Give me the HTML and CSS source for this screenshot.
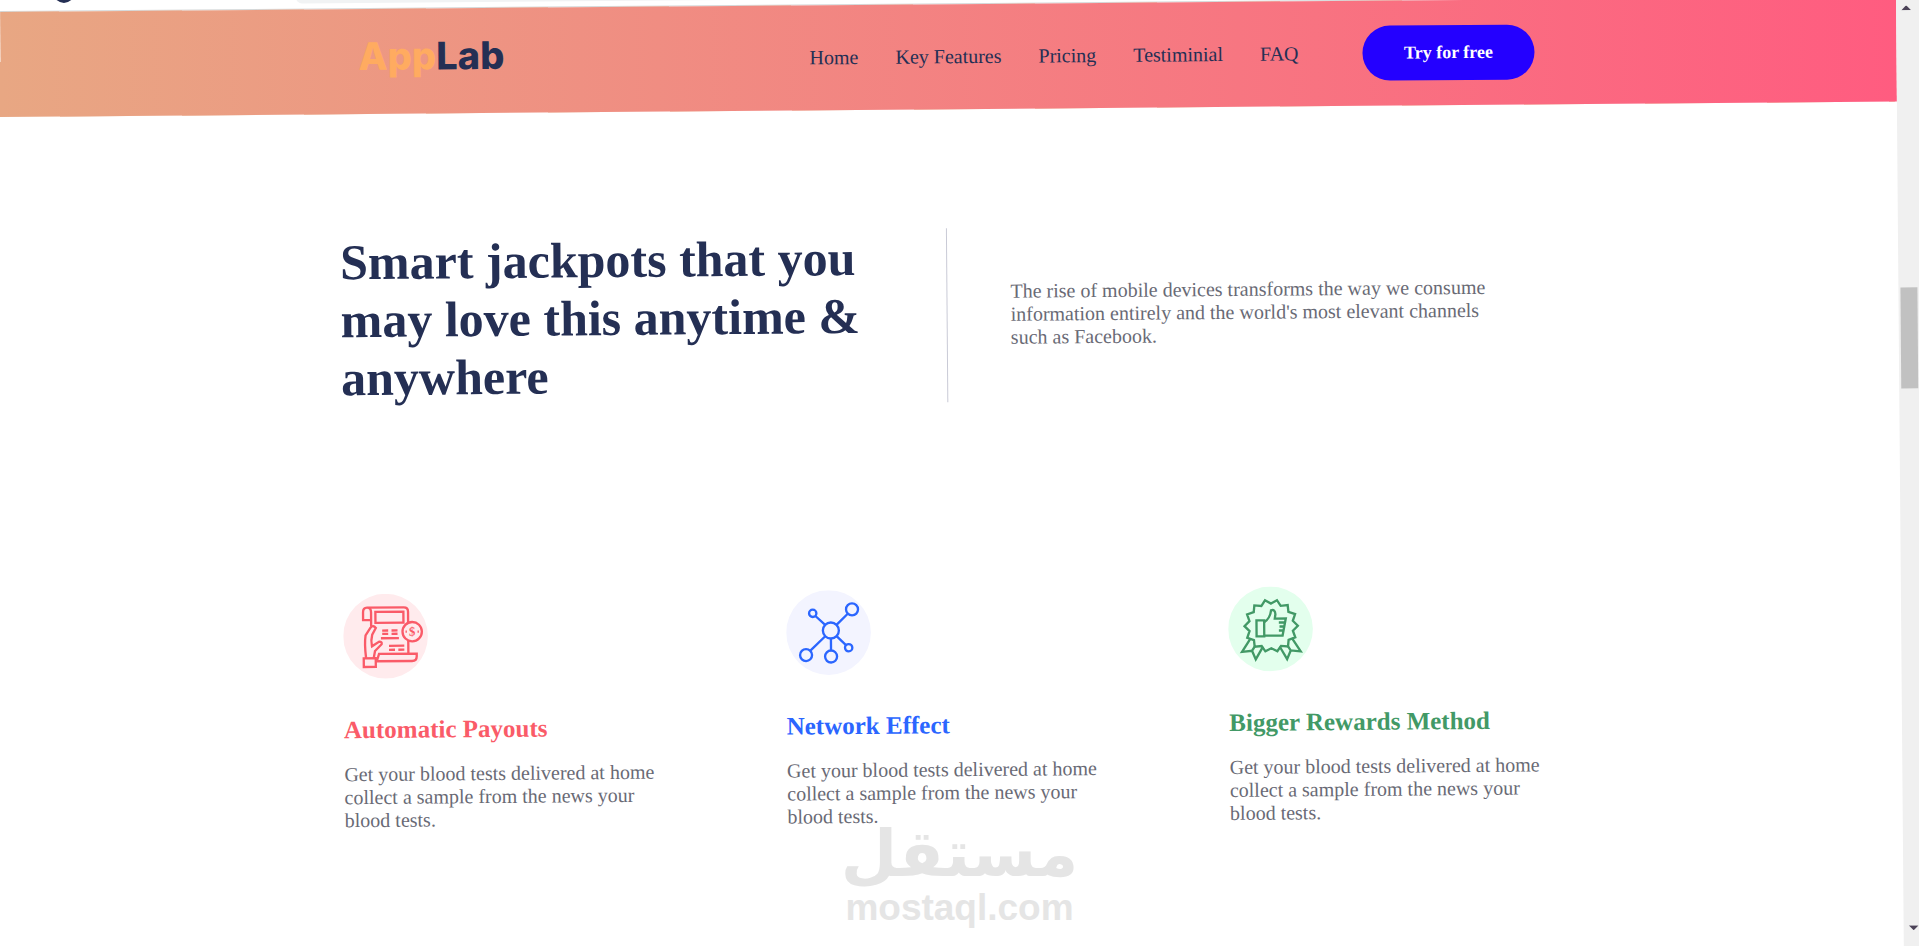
FILE: index.html
```html
<!DOCTYPE html>
<html lang="en">
<head>
    <meta charset="UTF-8">
    <meta name="viewport" content="width=device-width, initial-scale=1.0">
    <title>AppLab</title>
    <link rel="stylesheet" href="styles.css">
</head>
<body>
    <div class="screen">
        <div class="browser-bar">
            <svg class="reload" viewBox="0 0 20 5"><path d="M2 0Q10 7 18 0"/></svg>
            <div class="address"></div>
        </div>
        <div class="window">
            <div class="site">
                <header class="header">
                    <div class="container nav-bar">
                        <a class="logo" href="#"><span>App</span>Lab</a>
                        <nav class="menu">
                            <a href="#">Home</a>
                            <a href="#">Key Features</a>
                            <a href="#">Pricing</a>
                            <a href="#">Testiminial</a>
                            <a href="#">FAQ</a>
                        </nav>
                        <button class="try-btn" type="button">Try for free</button>
                    </div>
                </header>
                <main>
                    <section class="container intro">
                        <h1>Smart jackpots that you may love this anytime &amp; anywhere</h1>
                        <p>The rise of mobile devices transforms the way we consume information entirely and the world's most elevant channels such as Facebook.</p>
                    </section>
                    <section class="container features">
                        <article class="feature red">
                            <svg class="icon" viewBox="0 0 255 255">
                                <circle class="disc" cx="127" cy="127" r="127"/>
                                <path d="M83 78H60V55q0-14 12-14H182q13 0 13 13V86M72 41q12 0 12 14V98M195 142V178"/>
                                <rect x="97" y="54" width="84" height="33"/>
                                <path d="M117 110h18M145 110h18M117 120h18M145 120h18M113 133h54M137 156h46M137 168h18M165 168h18"/>
                                <circle cx="207" cy="114" r="29"/>
                                <text x="207" y="126">$</text>
                                <path d="M187 114h4M223 114h4"/>
                                <path d="M68 192Q63 150 67 124L82 101Q90 92 98 102L87 122Q82 140 86 157L108 143Q117 143 115 151L95 171L91 192"/>
                                <rect x="61" y="193" width="36" height="26"/>
                                <path d="M100 202L107 180H220V188q0 14-14 14H98"/>
                            </svg>
                            <h2>Automatic Payouts</h2>
                            <p>Get your blood tests delivered at home collect a sample from the news your blood tests.</p>
                        </article>
                        <article class="feature blue">
                            <svg class="icon" viewBox="0 0 255 255">
                                <circle class="disc" cx="127" cy="127" r="127"/>
                                <circle cx="134" cy="121" r="24"/>
                                <circle cx="80" cy="69" r="11"/>
                                <circle cx="198" cy="58" r="18"/>
                                <circle cx="59" cy="194" r="18"/>
                                <circle cx="134" cy="199" r="18"/>
                                <circle cx="187" cy="173" r="11"/>
                                <path d="M88 77L117 104M185 71L151 104M72 181L117 138M134 145V181M151 138L179 165"/>
                            </svg>
                            <h2>Network Effect</h2>
                            <p>Get your blood tests delivered at home collect a sample from the news your blood tests.</p>
                        </article>
                        <article class="feature green">
                            <svg class="icon" viewBox="0 0 255 255">
                                <circle class="disc" cx="127" cy="127" r="127"/>
                                <path d="M129 51L147 41L158 58L179 56L181 76L201 83L194 103L209 118L194 133L201 153L181 160L179 180L158 178L147 194L129 185L111 194L100 178L79 180L77 160L57 153L64 133L49 118L64 103L57 83L77 76L79 56L100 58L111 41Z"/>
                                <path d="M67 155L41 195L71 192L82 218L104 180M79 180L71 192M191 155L217 195L187 192L176 218L154 180M179 180L187 192"/>
                                <rect x="85" y="101" width="23" height="48"/>
                                <path d="M108 107Q126 96 129 71Q141 67 142 83L140 96H173L163 147H108M152 108h19M154 120h14M152 132h14"/>
                            </svg>
                            <h2>Bigger Rewards Method</h2>
                            <p>Get your blood tests delivered at home collect a sample from the news your blood tests.</p>
                        </article>
                    </section>
                </main>
            </div>
            <div class="scrollbar">
                <div class="arrow-up"></div>
                <div class="thumb"></div>
                <div class="arrow-down"></div>
            </div>
        </div>
    </div>
    <div class="watermark">
        <span class="mark-ar" lang="ar" dir="rtl">مستقل</span>
        <span class="mark-en">mostaql.com</span>
    </div>
</body>
</html>
```
FILE: styles.css
```css
* {
    box-sizing: border-box;
}
body {
    margin: 0;
    height: 100vh;
    overflow: hidden;
    background: #fff;
    font-family: "Liberation Serif", "Times New Roman", serif;
    font-size: 20px;
    line-height: 23px;
    color: #696a75;
}
h1, h2, p {
    margin: 0;
}
/* the whole window is tilted a little */
.screen {
    display: flex;
    flex-direction: column;
    min-height: calc(100vh + 16px);
    transform: rotate(-0.47deg);
    transform-origin: 0 0;
}
.browser-bar {
    display: flex;
    align-items: flex-start;
    height: 12px;
    padding: 0 40px 0 54px;
    border-bottom: 1px solid #d5d9da;
}
.reload {
    width: 20px;
    height: 5px;
    margin-right: 222px;
    fill: #242f54;
}
.address {
    flex: 1;
    height: 6px;
    border-radius: 0 0 6px 12px;
    background: #f1f3f4;
}
.window {
    display: flex;
    flex: 1;
}
.site {
    flex: 1;
}
.container {
    max-width: 1328px;
    margin: 0 auto;
}
.header {
    background: linear-gradient(90deg, #e8a783, #ff5c80);
    box-shadow: -2px 0 #e8a783;
}
.nav-bar {
    display: flex;
    align-items: center;
    height: 105px;
    padding: 0 78px 0 74px;
}
.logo {
    margin-right: auto;
    padding-bottom: 12px;
    font-family: Inter, sans-serif;
    font-size: 38px;
    font-weight: 800;
    line-height: 44px;
    color: #242f54;
    text-decoration: none;
}
.logo span {
    color: #ffab60;
}
.menu {
    display: flex;
    gap: 37px;
    margin-right: 64px;
}
.menu a {
    color: #242f54;
    text-decoration: none;
}
.try-btn {
    width: 172px;
    height: 55px;
    border: 0;
    border-radius: 28px;
    background: #2400ff;
    color: #fff;
    font-family: inherit;
    font-size: 18px;
    font-weight: bold;
}
.intro {
    display: grid;
    grid-template-columns: 607px 1fr;
    align-items: center;
    padding: 119px 54px 0;
}
.intro h1 {
    padding-right: 72px;
    border-right: 1px solid #c9cad6;
    font-size: 50px;
    line-height: 58px;
    color: #242f54;
}
.intro p {
    max-width: 560px;
    padding: 0 0 2px 63px;
}
.features {
    display: grid;
    grid-template-columns: repeat(3, 1fr);
    padding-top: 187px;
}
.feature {
    padding-left: 54px;
}
.icon {
    display: block;
    width: 85px;
    height: 85px;
    fill: none;
    stroke: currentColor;
    stroke-width: 7;
}
.icon .disc {
    stroke: none;
}
.icon text {
    fill: currentColor;
    stroke: none;
    font-size: 38px;
    font-weight: bold;
    text-anchor: middle;
}
.feature h2 {
    margin: 36px 0 19px;
    font-size: 25px;
    line-height: 29px;
}
.feature p {
    max-width: 320px;
}
.red .icon, .red h2 {
    color: #fa5b68;
}
.red .disc {
    fill: #ffebed;
}
.blue .icon, .blue h2 {
    color: #2b66ff;
}
.blue .disc {
    fill: #f3f4ff;
}
.green .icon, .green h2 {
    color: #429966;
}
.green .disc {
    fill: #e3ffed;
}
.scrollbar {
    display: flex;
    flex-direction: column;
    width: 23px;
    padding: 9px 4px 16px 2px;
    background: #f0f0f0;
}
.arrow-up, .arrow-down {
    width: 10px;
    height: 5px;
    margin-left: 3px;
    background: #4c4358;
    clip-path: polygon(50% 0, 100% 100%, 0 100%);
}
.arrow-down {
    margin-top: auto;
    clip-path: polygon(0 0, 100% 0, 50% 100%);
}
.thumb {
    height: 101px;
    margin-top: 277px;
    background: #c1c1c1;
}
/* watermark lies over the page */
.watermark {
    position: absolute;
    bottom: 18px;
    left: 0;
    right: 0;
    display: flex;
    flex-direction: column;
    align-items: center;
    color: #e5e5e5;
    font-weight: bold;
    pointer-events: none;
}
.mark-ar {
    font-family: "DejaVu Sans", sans-serif;
    font-size: 65px;
    line-height: 68px;
}
.mark-en {
    font-family: "Liberation Sans", Arial, sans-serif;
    font-size: 37px;
    line-height: 40px;
}
```
